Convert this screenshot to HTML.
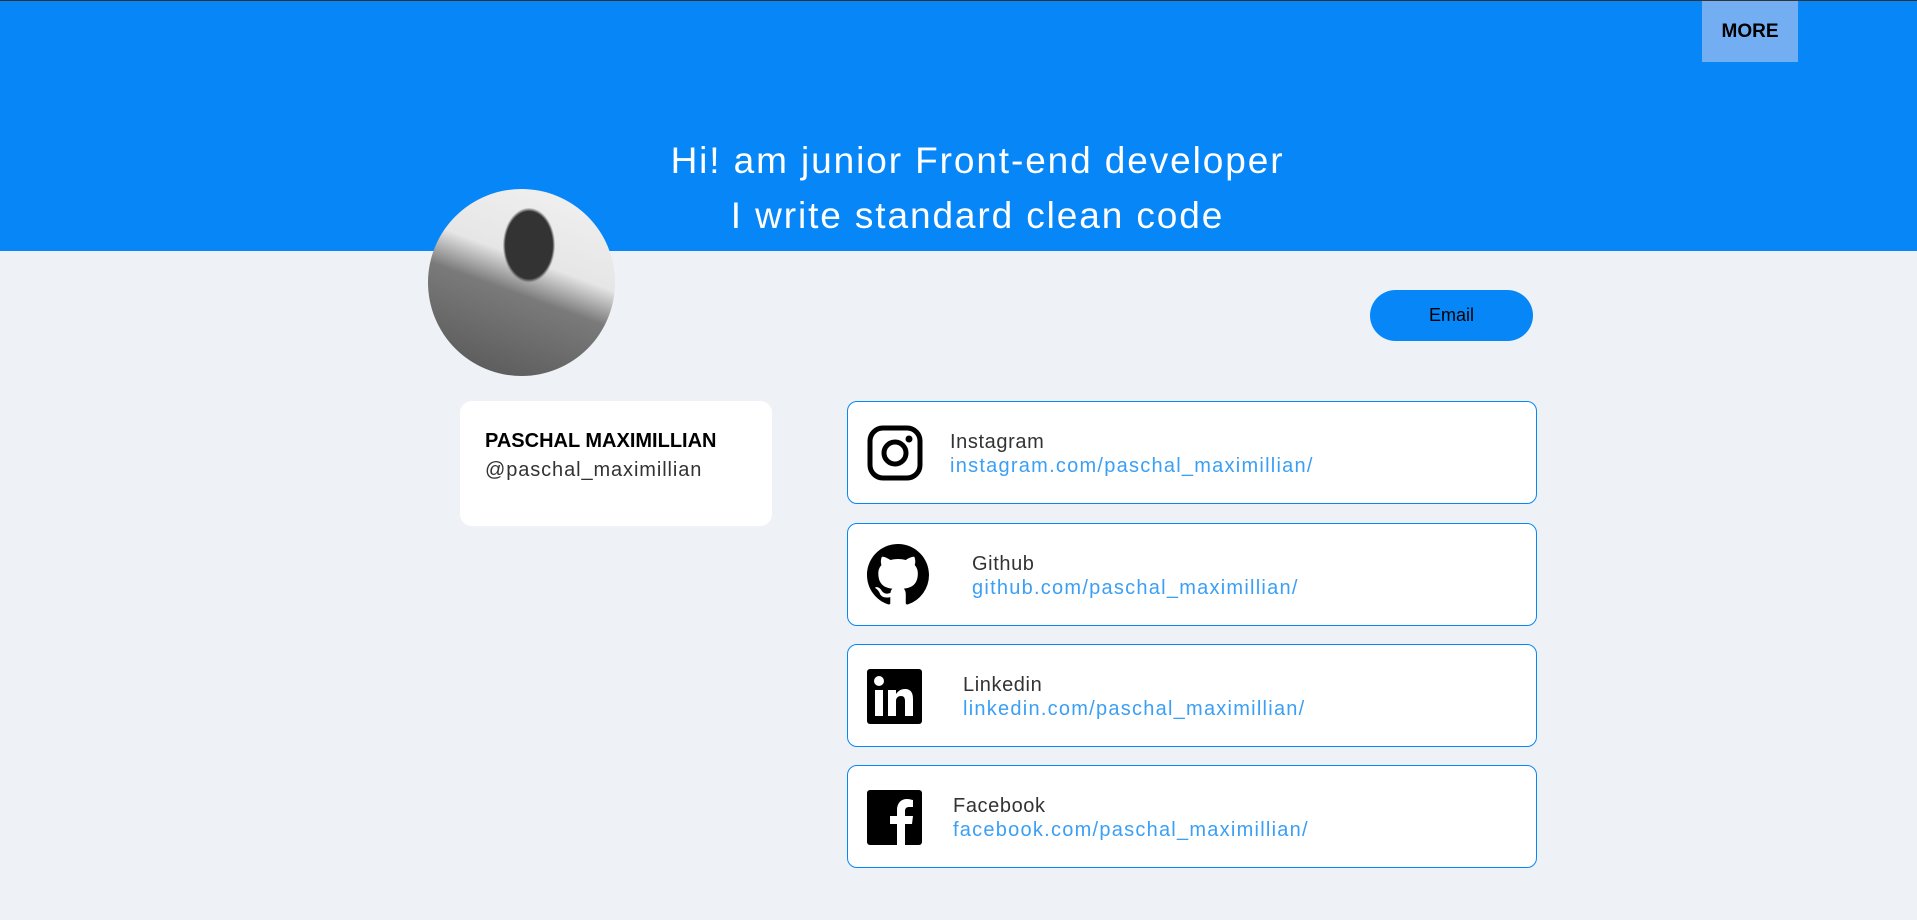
<!DOCTYPE html>
<html><head><meta charset="utf-8"><style>
*{margin:0;padding:0;box-sizing:border-box}
body{width:1917px;height:920px;background:#eef2f6;font-family:"Liberation Sans",sans-serif;position:relative;overflow:hidden}
.hdr{position:absolute;left:0;top:0;width:1917px;height:251px;background:#0787f7;border-top:1px solid #333}
.more{position:absolute;left:1702px;top:1px;width:96px;height:61px;background:#73adf2;font-weight:bold;font-size:19px;text-align:center;line-height:61px;color:#000}
.h1{position:absolute;left:0;width:1917px;text-align:center;color:#fff;font-size:37px;font-weight:300;letter-spacing:1.9px}
.av{position:absolute;left:428px;top:189px;width:187px;height:187px;border-radius:50%;overflow:hidden;background:radial-gradient(ellipse 14% 20% at 54% 30%,#333 0 90%,transparent 100%),linear-gradient(200deg,#f2f2f2 0%,#e6e6e6 40%,#7a7a7a 55%,#555 100%)}
.nc{position:absolute;left:460px;top:401px;width:312px;height:125px;background:#fff;border-radius:12px}
.nc b{position:absolute;left:25px;top:29px;font-size:20px;color:#000}
.nc span{position:absolute;left:25px;top:58px;font-size:20px;color:#333;letter-spacing:0.9px}
.em{position:absolute;left:1370px;top:290px;width:163px;height:51px;border-radius:26px;background:#0787f7;text-align:center;line-height:51px;font-size:18px;color:#000}
.card{position:absolute;left:847px;width:690px;height:103px;background:#fff;border:1px solid #0787f7;border-radius:10px}
.card svg{position:absolute;left:19px}
.t{position:absolute;font-size:20px;color:#333;letter-spacing:0.6px}
.l{position:absolute;font-size:20px;color:#3a9ff5;letter-spacing:1.25px}
</style></head><body>
<div class="hdr"></div>
<div class="more">MORE</div>
<div class="h1" style="top:140px;left:19px">Hi! am junior Front-end developer</div>
<div class="h1" style="top:195px;left:19px">I write standard clean code</div>
<div class="av"></div>
<div class="nc"><b>PASCHAL MAXIMILLIAN</b><span>@paschal_maximillian</span></div>
<div class="em">Email</div>

<div class="card" style="top:401px">
<svg style="top:23px" width="56" height="56" viewBox="0 0 56 56"><rect x="3" y="3" width="50" height="50" rx="13" fill="none" stroke="#000" stroke-width="5"/><circle cx="28" cy="28" r="11" fill="none" stroke="#000" stroke-width="5"/><circle cx="42" cy="14" r="3.5"/></svg>
<div class="t" style="left:102px;top:29px">Instagram</div><div class="l" style="left:102px;top:53px">instagram.com/paschal_maximillian/</div></div>

<div class="card" style="top:523px">
<svg style="top:20px" width="62" height="62" viewBox="0 0 16 16"><path d="M8 0C3.58 0 0 3.58 0 8c0 3.540 2.29 6.53 5.47 7.59.4.07.55-.17.55-.38 0-.19-.01-.82-.01-1.49-2.010.37-2.530-.49-2.690-.94-.09-.23-.48-.94-.82-1.130-.28-.15-.68-.52-.01-.53.63-.01 1.080.58 1.230.82.72 1.210 1.870.87 2.330.66.07-.52.28-.87.51-1.070-1.780-.2-3.640-.89-3.640-3.950 0-.87.31-1.590.82-2.150-.08-.2-.36-1.020.08-2.120 0 0 .67-.21 2.200.82.64-.18 1.320-.27 2-.27.68 0 1.360.09 2 .27 1.530-1.040 2.200-.82 2.200-.82.44 1.100.16 1.920.08 2.120.51.56.82 1.270.82 2.150 0 3.070-1.870 3.750-3.650 3.950.29.25.54.73.54 1.480 0 1.070-.01 1.930-.01 2.200 0 .21.15.46.55.38A8.013 8.013 0 0016 8c0-4.420-3.580-8-8-8z"/></svg>
<div class="t" style="left:124px;top:29px">Github</div><div class="l" style="left:124px;top:53px">github.com/paschal_maximillian/</div></div>

<div class="card" style="top:644px">
<svg style="top:24px" width="55" height="55" viewBox="0 0 55 55"><rect width="55" height="55" rx="3"/><rect x="8" y="21" width="8" height="26" fill="#fff"/><circle cx="12" cy="12" r="5" fill="#fff"/><path d="M21 21h8v4c2-3 5-5 9-5 6 0 8 4 8 10v17h-8V32c0-3-1-5-4-5s-5 2-5 5v15h-8z" fill="#fff"/></svg>
<div class="t" style="left:115px;top:29px">Linkedin</div><div class="l" style="left:115px;top:53px">linkedin.com/paschal_maximillian/</div></div>

<div class="card" style="top:765px">
<svg style="top:24px" width="55" height="55" viewBox="0 0 55 55"><rect width="55" height="55" rx="3"/><path d="M38 55V34h7l1-8h-8v-5c0-2 1-4 4-4h4v-7c-1 0-3-1-6-1-6 0-10 4-10 11v6h-7v8h7v21z" fill="#fff"/></svg>
<div class="t" style="left:105px;top:29px">Facebook</div><div class="l" style="left:105px;top:53px">facebook.com/paschal_maximillian/</div></div>
</body></html>
